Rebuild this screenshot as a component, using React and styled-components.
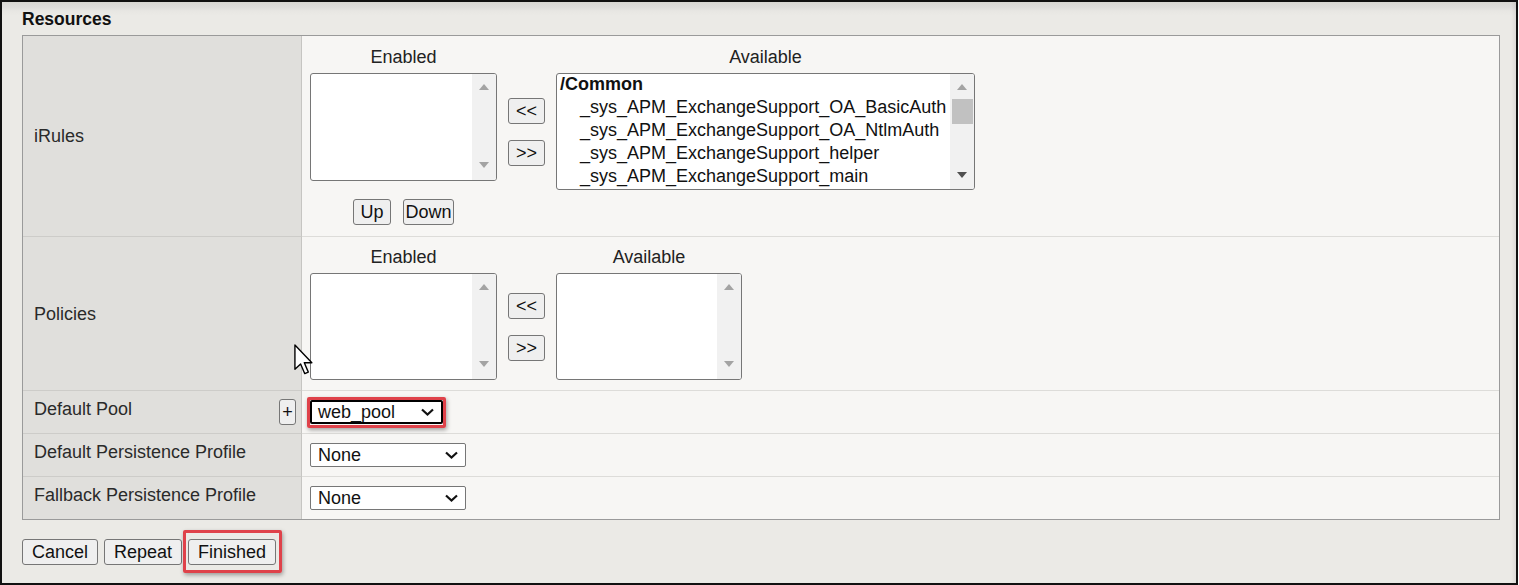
import React from 'react';
import styled, { createGlobalStyle } from 'styled-components';

const GlobalStyle = createGlobalStyle`
  html, body {
    margin: 0;
    padding: 0;
    background: #fff;
  }
  body {
    font-family: "Liberation Sans", Arial, sans-serif;
    font-size: 18px;
    color: #222;
  }
`;

const Frame = styled.div`
  position: relative;
  box-sizing: border-box;
  width: 1518px;
  height: 585px;
  border: 2px solid #111;
  background: linear-gradient(to bottom, #d9d8d4 0px, #dedddb 5px, #e8e7e3 9px, #ebeae6 14px, #ebeae6 100%);
  background-color: #ebeae6;
  box-shadow: inset -5px 0 4px -3px rgba(0, 0, 0, 0.08);
  overflow: hidden;
`;

const Header = styled.div`
  height: 33px;
  display: flex;
  align-items: center;
  padding-left: 20px;
  font-weight: bold;
  font-size: 17.5px;
  line-height: 20px;
  color: #111;
`;

const Table = styled.div`
  box-sizing: border-box;
  width: 1478px;
  margin-left: 20px;
  border: 1px solid #9a9a9a;
  background: #f7f6f4;
`;

const Row = styled.div`
  display: grid;
  grid-template-columns: 279px 1fr;
`;

const LabelCell = styled.div`
  display: flex;
  align-items: ${p => (p.$top ? 'flex-start' : 'center')};
  justify-content: space-between;
  padding: ${p => (p.$top ? '8px 5px 8px 11px' : '0 5px 0 11px')};
  background: #e0dfdc;
  border-right: 1px solid #c6c5c2;
  border-bottom: ${p => (p.$last ? 'none' : '1px solid #cdccc9')};
  line-height: 20px;
  color: #2a2a2a;
`;

const ValueCell = styled.div`
  padding: ${p => p.$pad};
  background: #f7f6f4;
  border-bottom: ${p => (p.$last ? 'none' : '1px solid #dddcd9')};
  display: flex;
  align-items: flex-start;
`;

const Swap = styled.div`
  display: grid;
  grid-template-columns: auto auto auto;
  column-gap: 11px;
  row-gap: 6px;
`;

const ColHead = styled.div`
  text-align: center;
  line-height: 20px;
  color: #222;
`;

const MoveButtons = styled.div`
  display: flex;
  flex-direction: column;
  gap: 16px;
  align-self: center;
`;

const OrderButtons = styled.div`
  display: flex;
  justify-content: center;
  gap: 12px;
  margin-top: 3px;
`;

const Button = styled.button`
  box-sizing: border-box;
  height: 26px;
  ${p => (p.$w ? `width: ${p.$w}px; padding: 0;` : 'padding: 0 9px;')}
  font-family: "Liberation Sans", Arial, sans-serif;
  font-size: 18px;
  line-height: 24px;
  color: #111;
  background: #efefef;
  border: 1px solid #767676;
  border-radius: 3px;
  margin-top: ${p => p.$mt || 0}px;
`;

const Listbox = styled.div`
  box-sizing: border-box;
  width: ${p => p.$w}px;
  height: ${p => p.$h}px;
  display: flex;
  background: #fff;
  border: 1px solid #767676;
  border-radius: 3px;
  overflow: hidden;
`;

const ListItems = styled.div`
  flex: 1;
  margin-top: -1px;
  padding-left: 3px;
  line-height: 23px;
  white-space: nowrap;
  overflow: hidden;
  color: #111;
`;

const Group = styled.div`
  font-weight: bold;
`;

const Option = styled.div`
  padding-left: 20px;
`;

const Scrollbar = styled.div`
  width: 24px;
  background: #f1f1f1;
  display: flex;
  flex-direction: column;
  align-items: center;
`;

const ArrowCell = styled.div`
  width: 100%;
  height: ${p => p.$h}px;
  display: flex;
  align-items: center;
  justify-content: center;
  flex-shrink: 0;
`;

const Arrow = styled.span`
  width: 0;
  height: 0;
  border-left: 5px solid transparent;
  border-right: 5px solid transparent;
  ${p =>
    p.$down
      ? `border-top: 6px solid ${p.$dark ? '#505050' : '#a3a3a3'};`
      : 'border-bottom: 6px solid #a3a3a3;'}
`;

const Thumb = styled.div`
  width: 21px;
  height: 25px;
  background: #c1c1c1;
  flex-shrink: 0;
`;

const Spacer = styled.div`
  flex: 1;
`;

const SelectBox = styled.div`
  box-sizing: border-box;
  width: ${p => p.$w}px;
  height: 24px;
  display: flex;
  align-items: center;
  justify-content: space-between;
  padding: ${p => (p.$focus ? '0 7px 0 6px' : '0 7px')};
  background: #fff;
  border: ${p => (p.$focus ? '2px solid #000' : '1px solid #767676')};
  border-radius: 2px;
  color: #111;
  line-height: 20px;
`;

const Highlight = styled.span`
  position: relative;
  display: inline-flex;
`;

const RedBox = styled.span`
  position: absolute;
  top: ${p => p.$t}px;
  right: ${p => p.$r}px;
  bottom: ${p => p.$b}px;
  left: ${p => p.$l}px;
  border: 3px solid #df424a;
  border-radius: 2px;
  box-shadow: 1px 2px 4px rgba(0, 0, 0, 0.35);
  pointer-events: none;
`;

const Footer = styled.div`
  display: flex;
  gap: 6px;
  margin: 19px 0 0 20px;
`;

const Cursor = styled.svg`
  position: absolute;
  left: 292px;
  top: 342px;
`;

const Chevron = () => (
  <svg width="13" height="8" viewBox="0 0 13 8">
    <polyline points="1,1.5 6.5,6.5 12,1.5" fill="none" stroke="#111" strokeWidth="2.2" />
  </svg>
);

const Select = ({ value, width, focus }) => (
  <SelectBox $w={width} $focus={focus}>
    <span>{value}</span>
    <Chevron />
  </SelectBox>
);

const List = ({ width, height, group, items, scroll }) => (
  <Listbox $w={width} $h={height}>
    <ListItems>
      {group && <Group>{group}</Group>}
      {items && items.map(item => <Option key={item}>{item}</Option>)}
    </ListItems>
    <Scrollbar>
      <ArrowCell $h={25}>
        <Arrow />
      </ArrowCell>
      {scroll && <Thumb />}
      <Spacer />
      <ArrowCell $h={scroll ? 28 : 31}>
        <Arrow $down $dark={scroll} />
      </ArrowCell>
    </Scrollbar>
  </Listbox>
);

const rules = [
  '_sys_APM_ExchangeSupport_OA_BasicAuth',
  '_sys_APM_ExchangeSupport_OA_NtlmAuth',
  '_sys_APM_ExchangeSupport_helper',
  '_sys_APM_ExchangeSupport_main',
];

const App = () => (
  <>
    <GlobalStyle />
    <Frame>
      <Header>Resources</Header>
      <Table>
        <Row>
          <LabelCell>iRules</LabelCell>
          <ValueCell $pad="11px 7px 11px 8px">
            <Swap>
              <ColHead>Enabled</ColHead>
              <div />
              <ColHead>Available</ColHead>
              <List width={187} height={108} />
              <MoveButtons>
                <Button $w={37}>&lt;&lt;</Button>
                <Button $w={37}>&gt;&gt;</Button>
              </MoveButtons>
              <List width={419} height={117} group="/Common" items={rules} scroll />
              <OrderButtons>
                <Button $w={38}>Up</Button>
                <Button $w={51}>Down</Button>
              </OrderButtons>
            </Swap>
          </ValueCell>
        </Row>
        <Row>
          <LabelCell>Policies</LabelCell>
          <ValueCell $pad="10px 7px 10px 8px">
            <Swap>
              <ColHead>Enabled</ColHead>
              <div />
              <ColHead>Available</ColHead>
              <List width={187} height={107} />
              <MoveButtons>
                <Button $w={37}>&lt;&lt;</Button>
                <Button $w={37}>&gt;&gt;</Button>
              </MoveButtons>
              <List width={186} height={107} />
            </Swap>
          </ValueCell>
        </Row>
        <Row>
          <LabelCell $top>
            <span>Default Pool</span>
            <Button $w={17}>+</Button>
          </LabelCell>
          <ValueCell $pad="9px 7px 9px 8px">
            <Highlight>
              <Select value="web_pool" width={133} focus />
              <RedBox $t={-3} $r={-3} $b={-4} $l={-3} />
            </Highlight>
          </ValueCell>
        </Row>
        <Row>
          <LabelCell $top>Default Persistence Profile</LabelCell>
          <ValueCell $pad="9px 7px 9px 8px">
            <Select value="None" width={156} />
          </ValueCell>
        </Row>
        <Row>
          <LabelCell $top $last>Fallback Persistence Profile</LabelCell>
          <ValueCell $pad="9px 7px 9px 8px" $last>
            <Select value="None" width={156} />
          </ValueCell>
        </Row>
      </Table>
      <Footer>
        <Button>Cancel</Button>
        <Button>Repeat</Button>
        <Highlight>
          <Button>Finished</Button>
          <RedBox $t={-9} $r={-6} $b={-8} $l={-5} />
        </Highlight>
      </Footer>
      <Cursor width="20" height="31" viewBox="0 0 13 20">
        <path
          d="M0.6 0.6 L0.6 16.4 L4.3 12.9 L7 19.2 L9.3 18.2 L6.7 12.1 L11.6 12.1 Z"
          fill="#fff"
          stroke="#000"
          strokeWidth="0.9"
          strokeLinejoin="round"
        />
      </Cursor>
    </Frame>
  </>
);

export default App;
